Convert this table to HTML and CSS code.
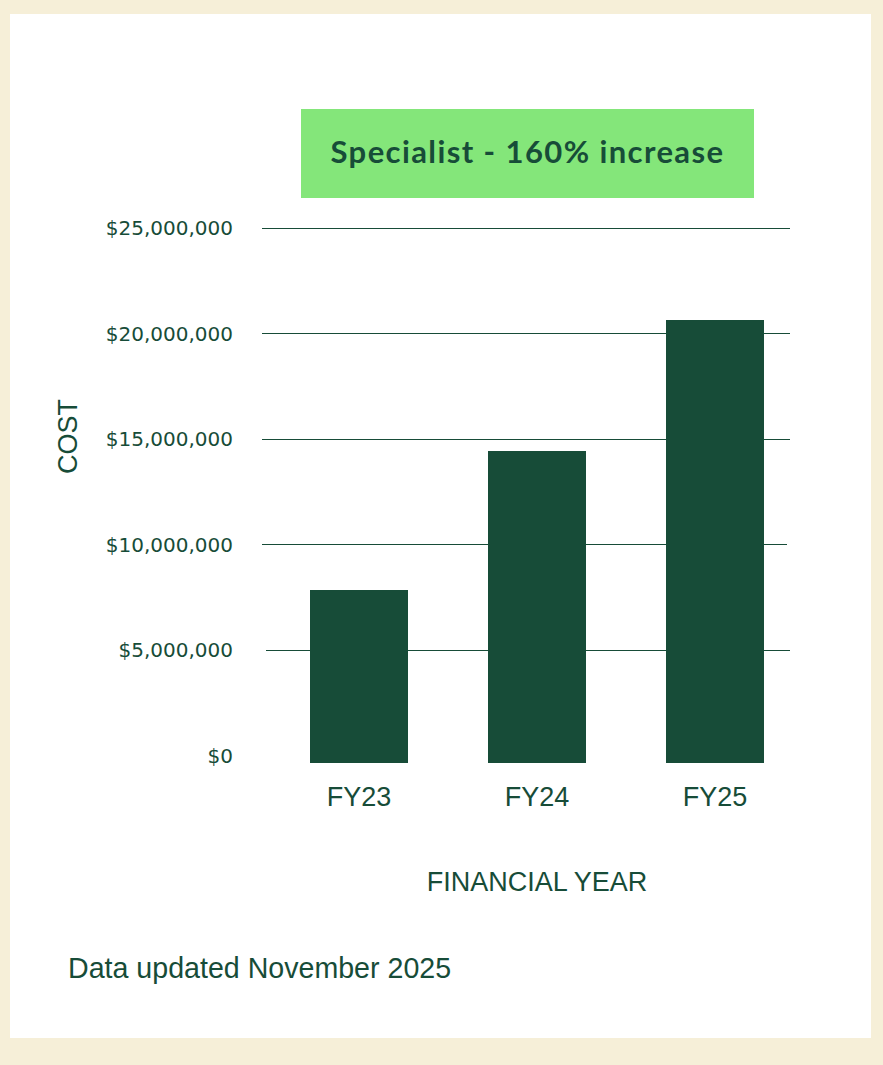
FILE: index.html
```html
<!DOCTYPE html>
<html lang="en">
<head>
<meta charset="utf-8">
<title>Specialist cost chart</title>
<link rel="stylesheet" href="styles.css">
</head>
<body>
<main class="card">
  <div class="badge">Specialist - 160% increase</div>
  <div class="chart">
    <div class="axis-y"><span class="axis-y-title">COST</span></div>
    <div class="plot">
      <div class="ticks">
        <div class="tick"><span class="tick-label">$25,000,000</span><span class="tick-line"></span></div>
        <div class="tick"><span class="tick-label">$20,000,000</span><span class="tick-line"></span></div>
        <div class="tick"><span class="tick-label">$15,000,000</span><span class="tick-line"></span></div>
        <div class="tick"><span class="tick-label">$10,000,000</span><span class="tick-line tick-line-short-end"></span></div>
        <div class="tick"><span class="tick-label">$5,000,000</span><span class="tick-line tick-line-short-start"></span></div>
        <div class="tick"><span class="tick-label">$0</span></div>
      </div>
      <div class="bars">
        <div class="bar" style="height:173px"></div>
        <div class="bar" style="height:312px"></div>
        <div class="bar" style="height:443px"></div>
      </div>
    </div>
  </div>
  <div class="x-labels">
    <span class="x-label">FY23</span>
    <span class="x-label">FY24</span>
    <span class="x-label">FY25</span>
  </div>
  <div class="x-title">FINANCIAL YEAR</div>
  <p class="note">Data updated November 2025</p>
</main>
</body>
</html>
```

FILE: styles.css
```css
html {
  background: #f6efd8;
}

body {
  margin: 0;
  min-height: 1065px;
  background: #f6efd8;
  color: #174c38;
  font-family: "Liberation Sans", Arial, sans-serif;
}

.card {
  display: block;
  box-sizing: border-box;
  margin: 14px 12px 0 10px;
  height: 1024px;
  background: #ffffff;
  padding-top: 95px;
}

.badge {
  display: flex;
  align-items: center;
  justify-content: center;
  box-sizing: border-box;
  margin-left: 291px;
  width: 453px;
  height: 89px;
  padding-bottom: 6px;
  background: #84e67a;
  color: #174c38;
  font-family: Lato, "Noto Sans", sans-serif;
  font-weight: 700;
  font-size: 31px;
  letter-spacing: 1.4px;
}

.chart {
  display: flex;
  margin-top: 18px;
}

.axis-y {
  box-sizing: border-box;
  width: 90px;
  padding-left: 47px;
  padding-top: 183px;
}

.axis-y-title {
  display: block;
  writing-mode: vertical-rl;
  transform: rotate(180deg);
  font-size: 27px;
  line-height: 22px;
}

.plot {
  display: grid;
}

.ticks,
.bars {
  grid-area: 1 / 1;
}

.tick {
  display: flex;
  align-items: center;
  height: 24px;
}

.tick + .tick {
  margin-top: 81.5px;
}

.tick-label {
  width: 133px;
  text-align: right;
  font-family: "DejaVu Sans", sans-serif;
  font-size: 20px;
  line-height: 24px;
}

.tick-line {
  display: block;
  margin-left: 29px;
  width: 528px;
  height: 1px;
  background: #174c38;
}

.tick-line-short-end {
  width: 525px;
}

.tick-line-short-start {
  margin-left: 33px;
  width: 524px;
}

.bars {
  align-self: end;
  display: flex;
  align-items: flex-end;
  gap: 80px;
  margin-left: 210px;
  padding-bottom: 4.5px;
}

.bar {
  width: 98px;
  background: #174c38;
}

.x-labels {
  display: flex;
  gap: 80px;
  margin-left: 300px;
  margin-top: 14px;
}

.x-label {
  width: 98px;
  text-align: center;
  font-size: 27px;
  line-height: 30px;
}

.x-title {
  margin-left: 300px;
  margin-top: 55px;
  width: 454px;
  text-align: center;
  font-size: 27px;
  line-height: 30px;
}

.note {
  margin: 55px 0 0 58px;
  font-size: 28.6px;
  line-height: 32px;
}
```
